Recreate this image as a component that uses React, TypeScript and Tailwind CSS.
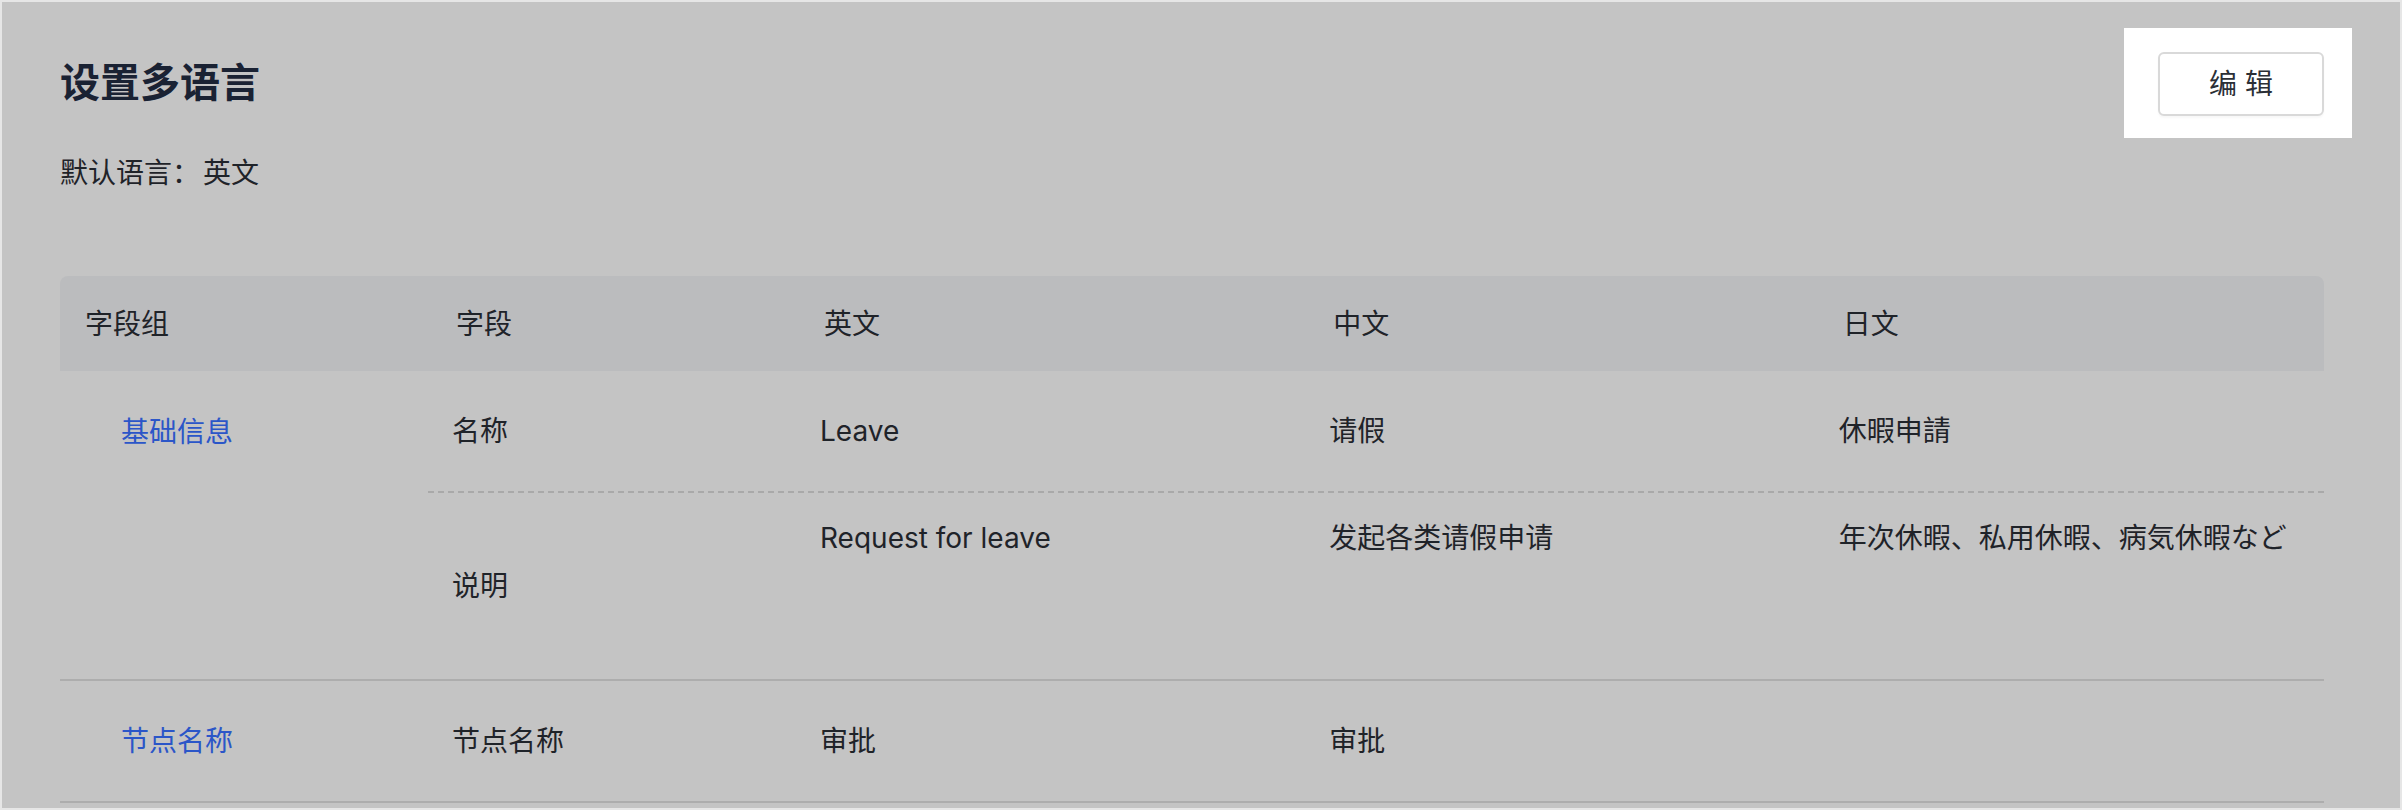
const FONT = "font-['Inter','Noto_Sans_CJK_SC',sans-serif]"

const HEADERS = ['字段组', '字段', '英文', '中文', '日文']

const GROUP_ROWS = [
    {
        field: '名称',
        values: ['Leave', '请假', '休暇申請'],
        tall: false,
        dashed: true,
    },
    {
        field: '说明',
        values: ['Request for leave', '发起各类请假申请', '年次休暇、私用休暇、病気休暇など'],
        tall: true,
        dashed: false,
    },
]

const ValueRow = ({ field, values, tall }: { field: string; values: string[]; tall: boolean }) => {
    return (
        <div
            className={`grid grid-cols-[368px_1fr_1fr_1fr] ${tall ? 'h-[186px]' : 'h-[120px]'}`}
        >
            <div className="flex items-center pl-[24px]">{field}</div>
            {values.map((v, i) => (
                <div
                    key={i}
                    className={`flex pl-[24px] ${tall ? 'items-start pt-[25px]' : 'items-center'}`}
                >
                    {v}
                </div>
            ))}
        </div>
    )
}

export default function App() {
    return (
        <div
            className={`${FONT} w-full h-[810px] border-2 border-[#e6e6e6] bg-[#c4c4c4] pl-[58px] pr-[76px] pt-[26px] text-[28px] leading-[40px] text-[#1f2329] overflow-hidden`}
        >
            <div className="flex items-center justify-between">
                <h1 className="text-[40px] leading-[56px] font-bold text-[#1a2233]">设置多语言</h1>
                <div className="bg-white pt-[24px] pb-[22px] pl-[34px] pr-[28px] -mr-[28px]">
                    <button className="w-[166px] h-[64px] rounded-[6px] border-2 border-[#d9d9d9] bg-white text-[28px] text-[#2b2f36] shadow-[0_2px_2px_rgba(0,0,0,0.03)]">
                        编 辑
                    </button>
                </div>
            </div>

            <div className="mt-[15px]">
                默认语言：<span className="ml-[3px]">英文</span>
            </div>

            <div className="mt-[83px]">
                <div className="grid grid-cols-[368px_368px_1fr_1fr_1fr] h-[95px] rounded-t-[8px] bg-[#bbbcbe]">
                    {HEADERS.map((h, i) => (
                        <div key={i} className={`flex items-center ${i === 0 ? 'pl-[25px]' : 'pl-[28px]'}`}>
                            {h}
                        </div>
                    ))}
                </div>

                <div className="flex border-b-2 border-[#adadad]">
                    <div className="w-[368px] shrink-0 pl-[61px] pt-[41px] text-[#2b56c8]">基础信息</div>
                    <div className="flex-1">
                        {GROUP_ROWS.map((r, i) => (
                            <div key={i} className={r.dashed ? 'border-b-2 border-dashed border-[#a9a9a9]' : ''}>
                                <ValueRow field={r.field} values={r.values} tall={r.tall} />
                            </div>
                        ))}
                    </div>
                </div>

                <div className="flex h-[122px] border-b-2 border-[#adadad]">
                    <div className="w-[368px] shrink-0 flex items-center pl-[61px] text-[#2b56c8]">节点名称</div>
                    <div className="flex-1 grid grid-cols-[368px_1fr_1fr_1fr]">
                        <div className="flex items-center pl-[24px]">节点名称</div>
                        <div className="flex items-center pl-[24px]">审批</div>
                        <div className="flex items-center pl-[24px]">审批</div>
                        <div />
                    </div>
                </div>
            </div>
        </div>
    )
}
